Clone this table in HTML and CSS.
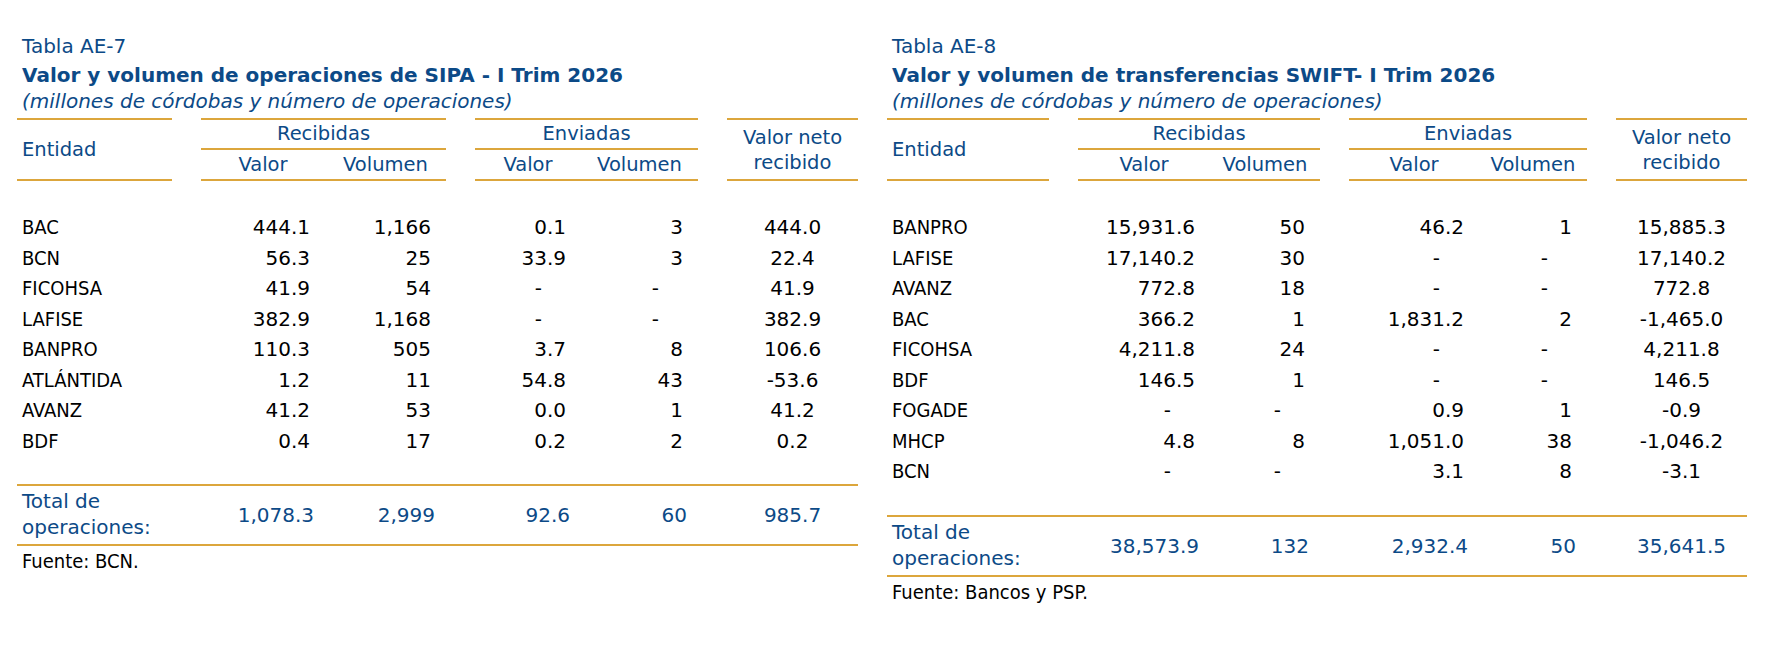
FILE: index.html
```html
<!DOCTYPE html>
<html lang="es">
<head>
<meta charset="utf-8">
<title>Tablas AE-7 y AE-8</title>
<link rel="stylesheet" href="styles.css">
</head>
<body>
<div class="page">
  <section class="block">
    <div class="caption">
      <div class="cap-label">Tabla AE-7</div>
      <div class="cap-title">Valor y volumen de operaciones de SIPA - I Trim 2026</div>
      <div class="cap-sub">(millones de córdobas y número de operaciones)</div>
    </div>
    <table class="tbl tbl-left">
      <colgroup>
        <col class="c-ent"><col class="c-gap"><col class="c-rv"><col class="c-rvol"><col class="c-gap"><col class="c-ev"><col class="c-evol"><col class="c-gap"><col class="c-net">
      </colgroup>
      <thead>
        <tr>
          <th class="h-ent" rowspan="2">Entidad</th>
          <th class="h-gap" rowspan="2"></th>
          <th class="h-grp" colspan="2">Recibidas</th>
          <th class="h-gap" rowspan="2"></th>
          <th class="h-grp" colspan="2">Enviadas</th>
          <th class="h-gap" rowspan="2"></th>
          <th class="h-net" rowspan="2">Valor neto<br>recibido</th>
        </tr>
        <tr>
          <th class="h-sub">Valor</th><th class="h-sub">Volumen</th>
          <th class="h-sub">Valor</th><th class="h-sub">Volumen</th>
        </tr>
      </thead>
      <tbody>
        <tr class="spacer-top"><td colspan="9"></td></tr>
        <tr class="row"><td class="ent">BAC</td><td></td><td class="num">444.1</td><td class="num">1,166</td><td></td><td class="num">0.1</td><td class="num">3</td><td></td><td class="net">444.0</td></tr>
        <tr class="row"><td class="ent">BCN</td><td></td><td class="num">56.3</td><td class="num">25</td><td></td><td class="num">33.9</td><td class="num">3</td><td></td><td class="net">22.4</td></tr>
        <tr class="row"><td class="ent">FICOHSA</td><td></td><td class="num">41.9</td><td class="num">54</td><td></td><td class="num na">-</td><td class="num na">-</td><td></td><td class="net">41.9</td></tr>
        <tr class="row"><td class="ent">LAFISE</td><td></td><td class="num">382.9</td><td class="num">1,168</td><td></td><td class="num na">-</td><td class="num na">-</td><td></td><td class="net">382.9</td></tr>
        <tr class="row"><td class="ent">BANPRO</td><td></td><td class="num">110.3</td><td class="num">505</td><td></td><td class="num">3.7</td><td class="num">8</td><td></td><td class="net">106.6</td></tr>
        <tr class="row"><td class="ent">ATLÁNTIDA</td><td></td><td class="num">1.2</td><td class="num">11</td><td></td><td class="num">54.8</td><td class="num">43</td><td></td><td class="net">-53.6</td></tr>
        <tr class="row"><td class="ent">AVANZ</td><td></td><td class="num">41.2</td><td class="num">53</td><td></td><td class="num">0.0</td><td class="num">1</td><td></td><td class="net">41.2</td></tr>
        <tr class="row"><td class="ent">BDF</td><td></td><td class="num">0.4</td><td class="num">17</td><td></td><td class="num">0.2</td><td class="num">2</td><td></td><td class="net">0.2</td></tr>
        <tr class="spacer-bottom"><td colspan="9"></td></tr>
      </tbody>
      <tfoot>
        <tr class="total">
          <td class="t-label">Total de<br>operaciones:</td><td></td>
          <td class="t-num">1,078.3</td><td class="t-num">2,999</td><td></td>
          <td class="t-num">92.6</td><td class="t-num">60</td><td></td>
          <td class="t-net">985.7</td>
        </tr>
      </tfoot>
    </table>
    <div class="source">Fuente: BCN.</div>
  </section>

  <section class="block">
    <div class="caption">
      <div class="cap-label">Tabla AE-8</div>
      <div class="cap-title">Valor y volumen de transferencias SWIFT- I Trim 2026</div>
      <div class="cap-sub">(millones de córdobas y número de operaciones)</div>
    </div>
    <table class="tbl tbl-right">
      <colgroup>
        <col class="c-ent"><col class="c-gap"><col class="c-rv"><col class="c-rvol"><col class="c-gap"><col class="c-ev"><col class="c-evol"><col class="c-gap"><col class="c-net">
      </colgroup>
      <thead>
        <tr>
          <th class="h-ent" rowspan="2">Entidad</th>
          <th class="h-gap" rowspan="2"></th>
          <th class="h-grp" colspan="2">Recibidas</th>
          <th class="h-gap" rowspan="2"></th>
          <th class="h-grp" colspan="2">Enviadas</th>
          <th class="h-gap" rowspan="2"></th>
          <th class="h-net" rowspan="2">Valor neto<br>recibido</th>
        </tr>
        <tr>
          <th class="h-sub">Valor</th><th class="h-sub">Volumen</th>
          <th class="h-sub">Valor</th><th class="h-sub">Volumen</th>
        </tr>
      </thead>
      <tbody>
        <tr class="spacer-top"><td colspan="9"></td></tr>
        <tr class="row"><td class="ent">BANPRO</td><td></td><td class="num">15,931.6</td><td class="num">50</td><td></td><td class="num">46.2</td><td class="num">1</td><td></td><td class="net">15,885.3</td></tr>
        <tr class="row"><td class="ent">LAFISE</td><td></td><td class="num">17,140.2</td><td class="num">30</td><td></td><td class="num na">-</td><td class="num na">-</td><td></td><td class="net">17,140.2</td></tr>
        <tr class="row"><td class="ent">AVANZ</td><td></td><td class="num">772.8</td><td class="num">18</td><td></td><td class="num na">-</td><td class="num na">-</td><td></td><td class="net">772.8</td></tr>
        <tr class="row"><td class="ent">BAC</td><td></td><td class="num">366.2</td><td class="num">1</td><td></td><td class="num">1,831.2</td><td class="num">2</td><td></td><td class="net">-1,465.0</td></tr>
        <tr class="row"><td class="ent">FICOHSA</td><td></td><td class="num">4,211.8</td><td class="num">24</td><td></td><td class="num na">-</td><td class="num na">-</td><td></td><td class="net">4,211.8</td></tr>
        <tr class="row"><td class="ent">BDF</td><td></td><td class="num">146.5</td><td class="num">1</td><td></td><td class="num na">-</td><td class="num na">-</td><td></td><td class="net">146.5</td></tr>
        <tr class="row"><td class="ent">FOGADE</td><td></td><td class="num na">-</td><td class="num na">-</td><td></td><td class="num">0.9</td><td class="num">1</td><td></td><td class="net">-0.9</td></tr>
        <tr class="row"><td class="ent">MHCP</td><td></td><td class="num">4.8</td><td class="num">8</td><td></td><td class="num">1,051.0</td><td class="num">38</td><td></td><td class="net">-1,046.2</td></tr>
        <tr class="row"><td class="ent">BCN</td><td></td><td class="num na">-</td><td class="num na">-</td><td></td><td class="num">3.1</td><td class="num">8</td><td></td><td class="net">-3.1</td></tr>
        <tr class="spacer-bottom"><td colspan="9"></td></tr>
      </tbody>
      <tfoot>
        <tr class="total">
          <td class="t-label">Total de<br>operaciones:</td><td></td>
          <td class="t-num">38,573.9</td><td class="t-num">132</td><td></td>
          <td class="t-num">2,932.4</td><td class="t-num">50</td><td></td>
          <td class="t-net">35,641.5</td>
        </tr>
      </tfoot>
    </table>
    <div class="source">Fuente: Bancos y PSP.</div>
  </section>
</div>
</body>
</html>
```

FILE: styles.css
```css
html, body {
  margin: 0;
  padding: 0;
  background: #ffffff;
}

body {
  font-family: "DejaVu Sans", Verdana, sans-serif;
  font-size: 20px;
  color: #000000;
}

.page {
  display: flex;
  align-items: flex-start;
  gap: 29px;
  padding-left: 17px;
}

.block {
  padding-top: 33px;
}

.caption {
  padding-left: 5px;
  margin-bottom: 4px;
  color: #0c4a87;
  white-space: nowrap;
}

.cap-label {
  line-height: 26px;
}

.cap-title {
  margin-top: 3px;
  line-height: 26px;
  font-weight: bold;
}

.cap-sub {
  line-height: 26px;
  font-style: italic;
}

.tbl {
  border-collapse: separate;
  border-spacing: 0;
  table-layout: fixed;
}

.tbl th,
.tbl td {
  padding: 0;
  white-space: nowrap;
}

.tbl-left { width: 841px; }
.tbl-right { width: 859px; }

.tbl .c-gap { width: 29px; }
.tbl .c-net { width: 131px; }

.tbl-left .c-ent { width: 155px; }
.tbl-left .c-rv { width: 124px; }
.tbl-left .c-rvol { width: 121px; }
.tbl-left .c-ev { width: 106px; }
.tbl-left .c-evol { width: 117px; }

.tbl-right .c-ent { width: 162px; }
.tbl-right .c-rv { width: 132px; }
.tbl-right .c-rvol { width: 110px; }
.tbl-right .c-ev { width: 130px; }
.tbl-right .c-evol { width: 108px; }

.tbl th {
  color: #0c4a87;
  font-weight: normal;
  font-size: 19.5px;
}

.h-ent {
  text-align: left;
  padding-left: 5px !important;
  vertical-align: middle;
  line-height: 26px;
  border-top: 2px solid #dca63c;
  border-bottom: 2px solid #dca63c;
}

.h-grp {
  text-align: center;
  line-height: 28px;
  border-top: 2px solid #dca63c;
  border-bottom: 2px solid #dca63c;
}

.h-sub {
  text-align: center;
  line-height: 29px;
  border-bottom: 2px solid #dca63c;
}

.h-net {
  text-align: center;
  vertical-align: middle;
  line-height: 25px;
  border-top: 2px solid #dca63c;
  border-bottom: 2px solid #dca63c;
}

.spacer-top td {
  height: 31px;
}

.spacer-bottom td {
  height: 28px;
}

.row td {
  height: 30.5px;
  line-height: 30.5px;
}

.ent {
  font-family: "DejaVu Sans Condensed", "DejaVu Sans", sans-serif;
  font-stretch: condensed;
  padding-left: 5px !important;
  text-align: left;
}

.num {
  text-align: right;
  padding-right: 15px !important;
}

.num.na {
  padding-right: 39px !important;
}

.net {
  text-align: center;
}

.total td {
  color: #0c4a87;
  border-top: 2px solid #dca63c;
  border-bottom: 2px solid #dca63c;
  vertical-align: middle;
}

.t-label {
  padding: 2px 0 4px 5px !important;
  line-height: 26px;
}

.t-num {
  text-align: right;
  padding-right: 11px !important;
}

.t-net {
  text-align: center;
}

.source {
  margin-top: 2px;
  padding-left: 5px;
  line-height: 26px;
  font-family: "DejaVu Sans Condensed", "DejaVu Sans", sans-serif;
  font-stretch: condensed;
}
```
